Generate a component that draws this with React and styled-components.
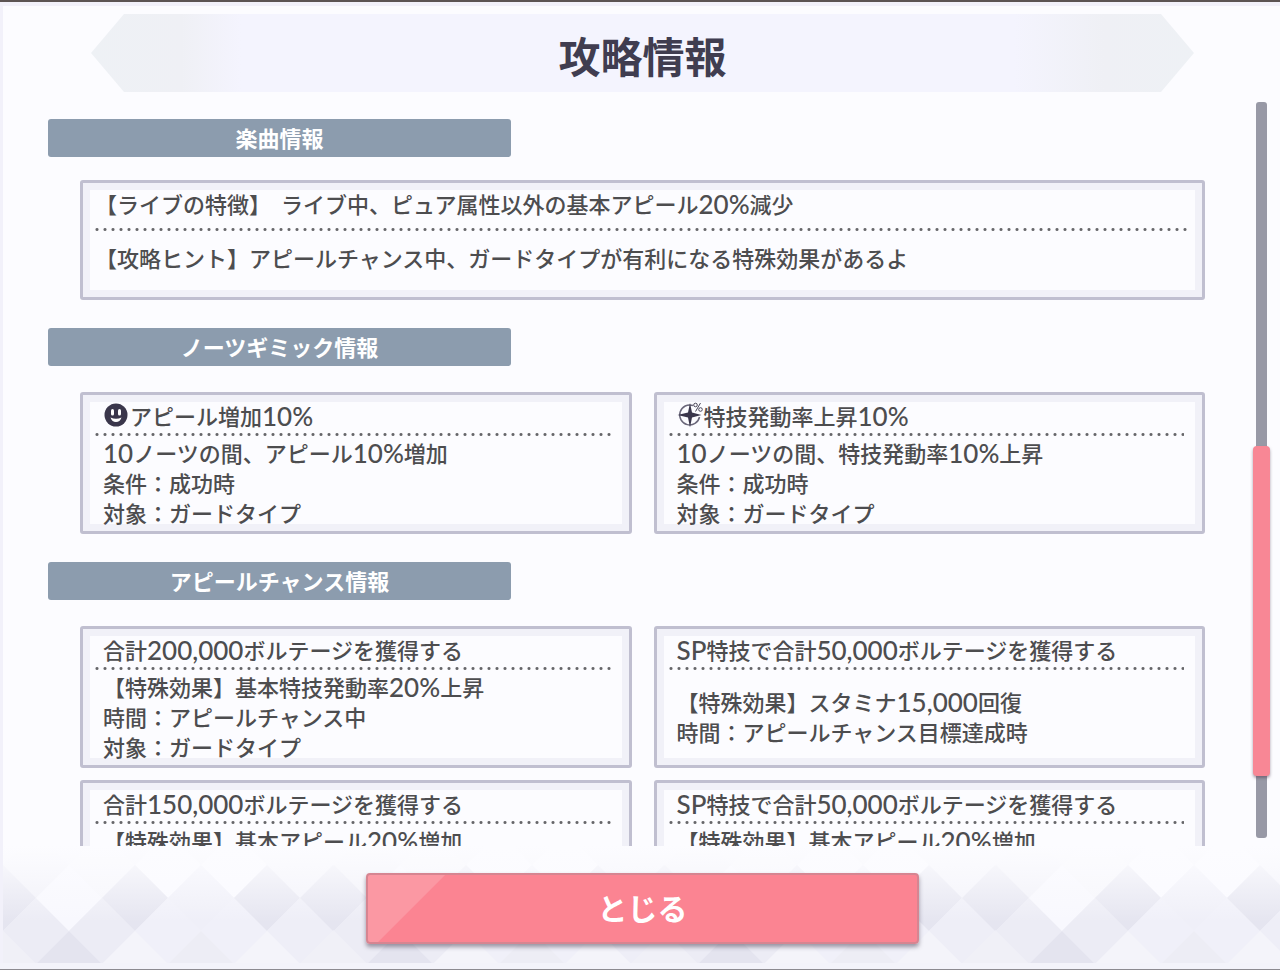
import React from 'react';
import styled, { createGlobalStyle } from 'styled-components';

const GlobalStyle = createGlobalStyle`
    * {
        box-sizing: border-box;
    }

    body {
        margin: 0;
        background: #fcfcff;
        color: #4d4d4f;
        font-family: 'Noto Sans CJK JP', sans-serif;
        font-size: 22px;
        font-weight: 500;
        text-spacing-trim: space-all;
    }
`;

const Container = styled.div`
    height: 100vh;
    display: flex;
    flex-direction: column;
    overflow: hidden;
    background: #fcfcff;
    border-top: 2px solid #5c5453;
    border-bottom: 1px solid #8c8a90;
    box-shadow: inset 3px 4px 0 #f2f1fa;
`;

const Banner = styled.header`
    flex: none;
    height: 78px;
    margin: 12px 86px 0 91px;
    padding-top: 3px;
    display: flex;
    align-items: center;
    justify-content: center;
    background: linear-gradient(90deg, #eef1f5 0, #eff0f5 90px, #f4f4fe 150px, #f4f4fe calc(100% - 180px), #eff0f5 calc(100% - 90px), #eef1f5 100%);
    clip-path: polygon(0 50%, 33px 0, calc(100% - 33px) 0, 100% 50%, calc(100% - 33px) 100%, 33px 100%);
`;

const Title = styled.h1`
    margin: 0;
    color: #403d50;
    font-size: 42px;
    font-weight: 700;
    line-height: 60px;
`;

const Body = styled.div`
    flex: 1;
    min-height: 0;
    display: flex;
`;

const List = styled.main`
    flex: 1;
    overflow: hidden;
    padding: 27px 51px 0 48px;
`;

const Section = styled.section`
    margin-bottom: 28px;
`;

const SectionTitle = styled.h2`
    width: 40%;
    min-width: 463px;
    height: 38px;
    margin: 0;
    border-radius: 3px;
    background: #8c9cae;
    color: #fff;
    font-size: 22px;
    font-weight: 700;
    line-height: 36px;
    text-align: center;
`;

const Panel = styled.div`
    border: 3px solid #c0bfd0;
    border-radius: 3px;
    box-shadow: inset 0 0 0 7px #f1f1f8;
    padding: 7px 12px 4px;
`;

const WidePanel = styled(Panel)`
    height: 120px;
    margin: 23px 0 0 32px;
`;

const Grid = styled.div`
    display: grid;
    grid-template-columns: 1fr 1fr;
    gap: 12px 22px;
    margin: 26px 0 0 32px;
`;

const Card = styled(Panel)`
    height: 142px;
    display: flex;
    flex-direction: column;
    padding-right: 18px;
`;

const CardTitle = styled.h3`
    flex: none;
    display: flex;
    align-items: center;
    height: 31px;
    margin: 0;
    padding: 0 0 4px 8px;
    font-size: 22px;
    font-weight: 500;
    line-height: 27px;
    white-space: nowrap;
`;

const CardBody = styled.div`
    flex: 1;
    display: flex;
    flex-direction: column;
    justify-content: center;
    padding-left: 8px;
`;

const Line = styled.p`
    margin: 0;
    line-height: 30px;
    height: 30px;
    white-space: pre;
`;

const Feature = styled(Line)`
    height: 38px;
    line-height: 27px;
`;

const Hint = styled(Line)`
    margin-top: 11px;
`;

const Dots = styled.div`
    flex: none;
    height: 3px;
    background: radial-gradient(circle, #66666a 1px, transparent 2px) -2px 0 / 8px 3px repeat-x;
`;

const Latin = styled.span`
    font-family: Lato, sans-serif;
    font-size: 26px;
    font-weight: 500;
    line-height: 1;
    vertical-align: -1px;
`;

const Icon = styled.svg`
    flex: none;
    width: 27px;
    height: 26px;
    margin-top: 4px;
    overflow: visible;
`;

const Scrollbar = styled.div`
    flex: none;
    position: relative;
    width: 11px;
    margin: 10px 13px 8px 0;
    border-radius: 3px;
    background: #9899a6;
`;

const Thumb = styled.div`
    position: absolute;
    left: -3px;
    right: -3px;
    border-radius: 4px;
    background: #f88795;
    box-shadow: 0 2px 3px rgba(80, 60, 80, 0.5);
`;

const Footer = styled.footer`
    flex: none;
    position: relative;
    height: 123px;
    padding-top: 27px;
    display: flex;
    justify-content: center;
    align-items: flex-start;
    border-bottom: 6px solid #f3f3fa;
`;

const Pattern = styled.svg`
    position: absolute;
    inset: 0 0 0 3px;
    width: calc(100% - 3px);
    height: 117px;
`;

const CloseButton = styled.button`
    position: relative;
    width: 553px;
    height: 71px;
    margin-left: 5px;
    padding: 0 0 4px;
    border: 2px solid #d68591;
    border-radius: 4px;
    background: linear-gradient(135deg, #fb98a3 0, #fb98a3 54px, #fb8492 55px);
    box-shadow: 0 3px 4px rgba(70, 60, 80, 0.5);
    color: #fff;
    font-family: inherit;
    font-size: 30px;
    font-weight: 700;
    line-height: 60px;
    cursor: pointer;
`;

const gimmicks = [
  {
    icon: 'smile',
    title: 'アピール増加10%',
    lines: ['10ノーツの間、アピール10%増加', '条件：成功時', '対象：ガードタイプ'],
  },
  {
    icon: 'star',
    title: '特技発動率上昇10%',
    lines: ['10ノーツの間、特技発動率10%上昇', '条件：成功時', '対象：ガードタイプ'],
  },
];

const chances = [
  {
    title: '合計200,000ボルテージを獲得する',
    lines: ['【特殊効果】基本特技発動率20%上昇', '時間：アピールチャンス中', '対象：ガードタイプ'],
  },
  {
    title: 'SP特技で合計50,000ボルテージを獲得する',
    lines: ['【特殊効果】スタミナ15,000回復', '時間：アピールチャンス目標達成時'],
  },
  {
    title: '合計150,000ボルテージを獲得する',
    lines: ['【特殊効果】基本アピール20%増加', '時間：アピールチャンス中', '対象：ガードタイプ'],
  },
  {
    title: 'SP特技で合計50,000ボルテージを獲得する',
    lines: ['【特殊効果】基本アピール20%増加', '時間：アピールチャンス中', '対象：ガードタイプ'],
  },
];

// numbers and latin letters are set in their own face
const Mixed = ({ text }) =>
  text.split(/([0-9A-Z,%]+)/).map((part, i) => (i % 2 ? <Latin key={i}>{part}</Latin> : part));

const SmileIcon = () => (
  <Icon viewBox="0 0 27 26" aria-hidden="true">
    <circle cx="13" cy="10" r="11.500" fill="#3a364b" />
    <rect x="8" y="4" width="3" height="6.500" rx="1.500" fill="#fff" />
    <rect x="15" y="4" width="3" height="6.500" rx="1.500" fill="#fff" />
    <path d="M7.500 12.500q5.500 2.500 11 0q-1.500 4.500-5.500 4.500t-5.500-4.500z" fill="#fff" />
  </Icon>
);

const StarIcon = () => (
  <Icon viewBox="0 0 27 26" aria-hidden="true">
    <path d="M16 .5A10 10 0 1 0 22.500 12" fill="none" stroke="#6a677a" strokeWidth="1.500" />
    <path d="M13 -2l2 9.500 9.500 2.500-9.500 2.500-2 10-2-10-10.500-2.500 10.500-2.500z" fill="#3a364b" />
    <circle cx="18.500" cy="0" r="1.800" fill="none" stroke="#4a475a" />
    <circle cx="23.500" cy="4.500" r="1.800" fill="none" stroke="#4a475a" />
    <path d="M23.500 -2l-5 8.500" stroke="#4a475a" />
  </Icon>
);

const InfoCard = ({ item }) => (
  <Card>
    <CardTitle>
      {item.icon === 'smile' && <SmileIcon />}
      {item.icon === 'star' && <StarIcon />}
      <span><Mixed text={item.title} /></span>
    </CardTitle>
    <Dots />
    <CardBody>
      {item.lines.map((line) => (
        <Line key={line}><Mixed text={line} /></Line>
      ))}
    </CardBody>
  </Card>
);

// one repeat of the argyle is five diamonds wide
const topRow = ['#f1f1f8', '#f6f6fb', '#fafaff', '#fafaff', '#f3f3fa'];
const columns = ['#e5e5f0', '#f8f8fe', '#e5e5f0', '#efeff8', '#e5e5f0'];
const middle = ['#ececf5', '#ececf5', '#f0f0f9', '#f0f0f9', '#eeeef7'];
const bottom = ['#f0f0f7', '#e4e4ef', '#f4f4fa', '#ededf5', '#f4f4fa'];

const diamond = (cx, cy) => `M${cx - 33} ${cy}L${cx} ${cy - 33}L${cx + 33} ${cy}L${cx} ${cy + 33}z`;

const Argyle = () => (
  <Pattern aria-hidden="true">
    <defs>
      <pattern id="argyle" width="331" height="117" patternUnits="userSpaceOnUse">
        <rect width="331" height="117" fill="#f3f3fa" />
        {[0, 1, 2, 3, 4, 5].map((i) => (
          <g key={i}>
            <path d={diamond(i * 66 + 33, 19)} fill={topRow[i % 5]} />
            <path d={diamond(i * 66, 52)} fill={columns[i % 5]} />
            <path d={diamond(i * 66 + 33, 85)} fill={middle[i % 5]} />
            <path d={diamond(i * 66, 118)} fill={bottom[i % 5]} />
          </g>
        ))}
      </pattern>
      <linearGradient id="fade" x1="0" y1="0" x2="0" y2="1">
        <stop offset="0" stopColor="#fcfcff" />
        <stop offset="0.15" stopColor="#fcfcff" stopOpacity="0.8" />
        <stop offset="0.65" stopColor="#fcfcff" stopOpacity="0" />
      </linearGradient>
    </defs>
    <rect width="100%" height="100%" fill="url(#argyle)" />
    <rect width="100%" height="100%" fill="url(#fade)" />
  </Pattern>
);

const App = () => {
  return (
    <>
      <GlobalStyle />
      <Container>
        <Banner>
          <Title>攻略情報</Title>
        </Banner>
        <Body>
          <List>
            <Section>
              <SectionTitle>楽曲情報</SectionTitle>
              <WidePanel>
                <Feature><Mixed text="【ライブの特徴】  ライブ中、ピュア属性以外の基本アピール20%減少" /></Feature>
                <Dots />
                <Hint>【攻略ヒント】アピールチャンス中、ガードタイプが有利になる特殊効果があるよ</Hint>
              </WidePanel>
            </Section>
            <Section>
              <SectionTitle>ノーツギミック情報</SectionTitle>
              <Grid>
                {gimmicks.map((item) => <InfoCard key={item.title} item={item} />)}
              </Grid>
            </Section>
            <Section>
              <SectionTitle>アピールチャンス情報</SectionTitle>
              <Grid>
                {chances.map((item, i) => <InfoCard key={i} item={item} />)}
              </Grid>
            </Section>
          </List>
          <Scrollbar>
            <Thumb style={{ top: '46.800%', height: '44.800%' }} />
          </Scrollbar>
        </Body>
        <Footer>
          <Argyle />
          <CloseButton type="button">とじる</CloseButton>
        </Footer>
      </Container>
    </>
  )
}

export default App
